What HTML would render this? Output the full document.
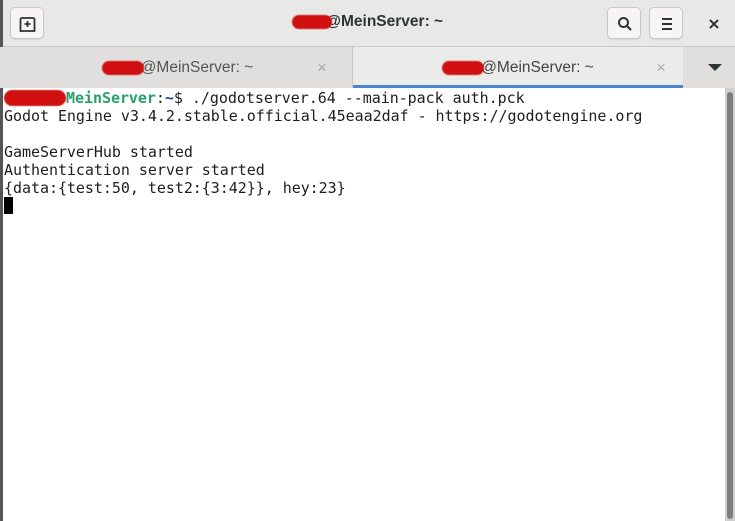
<!DOCTYPE html>
<html><head><meta charset="utf-8"><style>
*{margin:0;padding:0;box-sizing:border-box}
body{width:735px;height:521px;overflow:hidden;background:#fff;font-family:"Liberation Sans","DejaVu Sans",sans-serif;position:relative}
.hdr{position:absolute;left:0;top:0;width:735px;height:47px;background:#e8e8e7;border-bottom:1px solid #cdc7c2}
.btn{position:absolute;top:7px;width:34px;height:32px;background:#f6f5f4;border:1px solid #cdc7c2;border-radius:5px;box-shadow:0 1px 1px rgba(0,0,0,.08)}
.title{position:absolute;top:13px;left:0;width:735px;text-align:center;font-size:15.5px;font-weight:bold;color:#2e3436}
.tabs{position:absolute;left:0;top:47px;width:735px;height:41px;background:#e0dfdd}
.tab{position:absolute;top:0;height:41px;font-size:15.5px;color:#555;text-align:center;line-height:42px}
.red{display:inline-block;background:#d01010;border-radius:10px;height:14px;vertical-align:middle;filter:blur(.6px)}
.term{position:absolute;left:3px;top:88px;width:722px;height:433px;background:#fff;font-family:"DejaVu Sans Mono",monospace;font-size:15px;letter-spacing:-0.04px;line-height:18px;color:#1e1e1e;white-space:pre;padding-top:1px;padding-left:1px}
</style></head><body>
<div class="hdr">
<div class="btn" style="left:10px"><svg width="34" height="32" viewBox="0 0 34 32"><path d="M11 10h11a1.5 1.5 0 0 1 1.5 1.5V23h-14V11.5A1.5 1.5 0 0 1 11 10z" fill="none" stroke="#2e3436" stroke-width="1.8"/><path d="M16.5 13v6M13.5 16h6" stroke="#2e3436" stroke-width="1.8"/></svg></div>
<div class="title"><span class="red" style="width:40px;margin-right:-6px"></span>@MeinServer: ~</div>
<div class="btn" style="left:607px"><svg width="34" height="32" viewBox="0 0 34 32"><circle cx="15.5" cy="14.5" r="4.5" fill="none" stroke="#2e3436" stroke-width="2"/><path d="M19 18l4 4" stroke="#2e3436" stroke-width="2.2"/></svg></div>
<div class="btn" style="left:649px"><svg width="34" height="32" viewBox="0 0 34 32"><path d="M12 11h10M12 16h10M12 21h10" stroke="#2e3436" stroke-width="2"/></svg></div>
<svg style="position:absolute;left:706px;top:16px" width="16" height="16" viewBox="0 0 16 16"><path d="M4 4l8 8M12 4l-8 8" stroke="#2e3436" stroke-width="2"/></svg>
</div>
<div style="position:absolute;left:0;top:0;width:3px;height:521px;background:#555"></div>
<div class="tabs">
<div class="tab" style="left:3px;width:350px;border-right:1px solid #cdc7c2"><span class="red" style="width:42px;margin-right:-3px"></span>@MeinServer: ~<span style="position:absolute;left:314px;color:#aaa;font-size:17px">×</span></div>
<div class="tab" style="left:353px;width:330px;background:#ebebea;color:#444"><span class="red" style="width:42px;margin-right:-3px"></span>@MeinServer: ~<span style="position:absolute;left:303px;color:#aaa;font-size:17px">×</span><div style="position:absolute;left:0;bottom:0;width:330px;height:3px;background:#4a86cc"></div></div>
<svg style="position:absolute;left:708px;top:17px" width="14" height="8"><path d="M0 0h14L7 7z" fill="#2e3436"/></svg>
</div>
<div class="term"><span class="red" style="width:62px;height:16px;vertical-align:-3px"></span><b style="color:#26a269">MeinServer</b>:<b style="color:#12488b">~</b>$ ./godotserver.64 --main-pack auth.pck
Godot Engine v3.4.2.stable.official.45eaa2daf - https://godotengine.org

GameServerHub started
Authentication server started
{data:{test:50, test2:{3:42}}, hey:23}
<span style="display:inline-block;width:9px;height:17px;background:#000;vertical-align:-3px"></span></div>
<div style="position:absolute;left:725px;top:88px;width:10px;height:433px;background:#cfcfcf"></div>
<div style="position:absolute;left:727px;top:92px;width:6px;height:427px;background:#7e7e7e;border-radius:3px"></div>
</body></html>
